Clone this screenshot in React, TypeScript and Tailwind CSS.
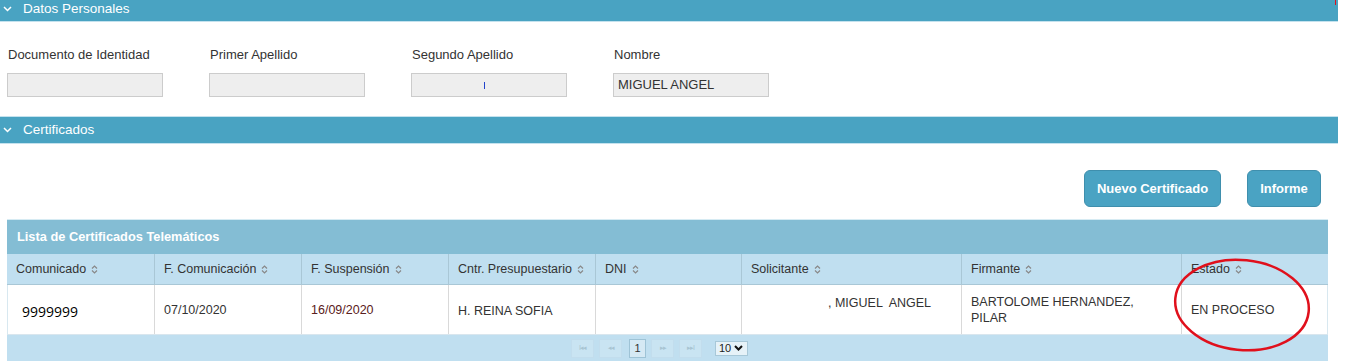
import React from "react";

const Chevron = () => (
  <svg width="9" height="6" viewBox="0 0 9 6" className="shrink-0">
    <polyline points="1,1 4.5,4.5 8,1" fill="none" stroke="white" strokeWidth="1.5" />
  </svg>
);

const Sort = () => (
  <svg width="7" height="9" viewBox="0 0 7 9" className="ml-[5px] inline-block">
    <polyline points="1,3.5 3.5,1 6,3.5" fill="none" stroke="#888" strokeWidth="1.2" />
    <polyline points="1,5.5 3.5,8 6,5.5" fill="none" stroke="#888" strokeWidth="1.2" />
  </svg>
);

const Field = ({ label, value, mark }: { label: string; value?: string; mark?: boolean }) => (
  <div className="w-[156px] flex flex-col">
    <div className="h-[16px] text-[13px] leading-[16px] text-[#333] pl-[1px] whitespace-nowrap">{label}</div>
    <div className="mt-[10px] h-[24px] bg-[#eeeeee] border border-[#cccccc] text-[13px] leading-[22px] text-[#333] pl-[4px] relative">
      {value}
      {mark && <span className="absolute left-[72px] top-[8px] w-[1px] h-[7px] bg-[#2244cc]" />}
    </div>
  </div>
);

const cols = [
  { name: "Comunicado", w: "w-[147px]" },
  { name: "F. Comunicación", w: "w-[147px]" },
  { name: "F. Suspensión", w: "w-[147px]" },
  { name: "Cntr. Presupuestario", w: "w-[147px]" },
  { name: "DNI", w: "w-[146px]" },
  { name: "Solicitante", w: "w-[220px]" },
  { name: "Firmante", w: "w-[220px]" },
  { name: "Estado", w: "w-[147px]" },
];

const PagerBtn = ({ children }: { children: React.ReactNode }) => (
  <div className="w-[23px] h-[19px] bg-[#c9e4f2] border border-[#c2dded] flex items-center justify-center text-[7px] text-[#a8c4d2] tracking-[-1px]">
    {children}
  </div>
);

export default function App() {
  return (
    <div className="w-[1350px] h-[361px] overflow-hidden bg-white relative" style={{ fontFamily: '"Liberation Sans", Arial, sans-serif' }}>
      <div className="w-[1338px]">
        {/* Datos Personales */}
        <div className="h-[22px] border-b border-[#c4e2ee] bg-[#49a3c2] flex items-center pb-[3px] pl-[3px] gap-[11px] text-white text-[13.5px]">
          <Chevron />
          <span>Datos Personales</span>
        </div>
        <div className="flex gap-[46px] px-[7px] pt-[25px] pb-[19px]">
          <Field label="Documento de Identidad" />
          <Field label="Primer Apellido" />
          <Field label="Segundo Apellido" mark />
          <Field label="Nombre" value="MIGUEL ANGEL" />
        </div>
        <div className="h-[28px] border-y border-[#c4e2ee] bg-[#49a3c2] flex items-center pl-[3px] gap-[11px] text-white text-[13.5px]">
          <Chevron />
          <span>Certificados</span>
        </div>

        {/* Buttons */}
        <div className="flex justify-end gap-[26px] pr-[17px] mt-[26px]">
          <button className="h-[37px] w-[137px] rounded-[6px] bg-[#4aa3c3] border border-[#3f8fad] text-white font-bold text-[13px]">
            Nuevo Certificado
          </button>
          <button className="h-[37px] w-[74px] rounded-[6px] bg-[#4aa3c3] border border-[#3f8fad] text-white font-bold text-[13px]">
            Informe
          </button>
        </div>

        {/* Table panel */}
        <div className="ml-[7px] mt-[12px] w-[1321px]">
          <div className="h-[35px] bg-[#84bdd4] border-t border-[#d6ebf3] flex items-center pl-[10px] text-white font-bold text-[12.8px]">
            Lista de Certificados Telemáticos
          </div>
          <div className="flex h-[31px] bg-[#c0dff0] border-b border-[#a9c7d6]">
            {cols.map((c, i) => (
              <div
                key={c.name}
                className={`${c.w} flex items-center pl-[9px] text-[12.5px] text-[#333] whitespace-nowrap ${i > 0 ? "border-l border-[#a9c7d6]" : ""}`}
              >
                {c.name}
                <Sort />
              </div>
            ))}
          </div>
          <div className="flex h-[49px] bg-white text-[12.5px] text-[#333] border-x border-[#d8e8f0]">
            <div className="w-[146px] flex items-center pl-[14px] pt-[3px] text-[14px] text-black" style={{ fontFamily: '"Open Sans", "DejaVu Sans", sans-serif' }}>
              9999999
            </div>
            <div className="w-[147px] border-l border-[#d9d9d9] pl-[9px] pt-[16px]">07/10/2020</div>
            <div className="w-[147px] border-l border-[#d9d9d9] pl-[9px] pt-[16px] text-[#5a2020]">16/09/2020</div>
            <div className="w-[147px] border-l border-[#d9d9d9] pl-[9px] pt-[17px]">H. REINA SOFIA</div>
            <div className="w-[146px] border-l border-[#d9d9d9]" />
            <div className="w-[220px] border-l border-[#d9d9d9] pl-[86px] pt-[9px] whitespace-pre">, MIGUEL  ANGEL</div>
            <div className="w-[220px] border-l border-[#d9d9d9] pl-[9px] pt-[9px] leading-[16px]">
              BARTOLOME HERNANDEZ,
              <br />
              PILAR
            </div>
            <div className="w-[146px] border-l border-[#d9d9d9] pl-[9px] pt-[16px]">EN PROCESO</div>
          </div>
          <div className="h-[27px] bg-[#c0dff0] border-t border-[#d9e6ee] flex items-center justify-center gap-[5px] pr-[16px]">
            <PagerBtn>I◂◂</PagerBtn>
            <PagerBtn>◂◂</PagerBtn>
            <div className="ml-[2px] w-[17px] h-[19px] bg-[#d5e9f4] border border-[#9ec3d6] flex items-center justify-center text-[11px] text-[#333]">1</div>
            <PagerBtn>▸▸</PagerBtn>
            <PagerBtn>▸▸I</PagerBtn>
            <div className="ml-[8px] w-[33px] h-[15px] bg-[#e6f2f8] border border-[#a8c8d8] flex items-center pl-[3px] gap-[3px] text-[11px] text-[#222]">
              10
              <svg width="9" height="6" viewBox="0 0 9 6">
                <polyline points="1,1 4.5,4.5 8,1" fill="none" stroke="#111" strokeWidth="2" />
              </svg>
            </div>
          </div>
        </div>
      </div>

      {/* red annotation ellipse */}
      <svg className="absolute left-[1170px] top-[255px]" width="146" height="100" viewBox="0 0 146 100">
        <ellipse cx="72" cy="50" rx="67" ry="45" transform="rotate(6 72 50)" fill="none" stroke="#e0101c" strokeWidth="2.5" />
      </svg>
      <div className="absolute left-[1335px] top-0 w-[1px] h-[5px] bg-[#e0101c]" />
    </div>
  );
}
